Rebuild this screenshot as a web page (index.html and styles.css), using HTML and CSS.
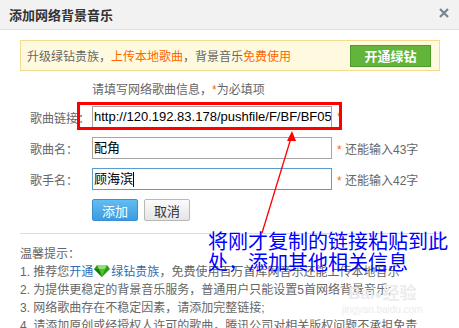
FILE: index.html
```html
<!DOCTYPE html>
<html lang="zh-CN">
<head>
    <meta charset="UTF-8">
    <title>添加网络背景音乐</title>
    <link rel="stylesheet" href="styles.css">
</head>
<body>
    <div class="dialog">
        <div class="dialog-header">
            <span class="dialog-title">添加网络背景音乐</span>
            <svg class="close-btn" width="10" height="10" viewBox="0 0 10 10">
                <path d="M1 1 L9 9 M9 1 L1 9" stroke="#7b8394" stroke-width="2.2"/>
            </svg>
        </div>
        <div class="dialog-body">
            <div class="notice">
                <span>升级绿钻贵族，<em>上传本地歌曲</em>，背景音乐<em>免费使用</em></span>
                <button class="btn-green">开通绿钻</button>
            </div>
            <div class="form">
                <div class="form-hint">请填写网络歌曲信息，<i>*</i>为必填项</div>
                <div class="form-row">
                    <label>歌曲链接：</label>
                    <div class="field">http://120.192.83.178/pushfile/F/BF/BF05E</div>
                    <span class="req"><i>*</i></span>
                </div>
                <div class="form-row">
                    <label>歌曲名：</label>
                    <div class="field">配角</div>
                    <span class="req"><i>*</i> 还能输入43字</span>
                </div>
                <div class="form-row">
                    <label>歌手名：</label>
                    <div class="field focused">顾海滨<span class="caret"></span></div>
                    <span class="req"><i>*</i> 还能输入42字</span>
                </div>
                <div class="form-actions">
                    <button class="btn btn-blue">添加</button>
                    <button class="btn btn-gray">取消</button>
                </div>
            </div>
            <div class="tips">
                <div class="tips-title">温馨提示：</div>
                <div>1. 推荐您<a>开通</a><svg class="gem" width="16" height="12" viewBox="0 0 16 12"><polygon points="3,0 13,0 16,4 8,12 0,4" fill="#2f9b1c"/><polygon points="3,0 13,0 11,4 5,4" fill="#8fe070"/><polygon points="5,4 11,4 8,12" fill="#4cc22c"/><polygon points="0,4 5,4 8,12" fill="#1d7a10"/></svg><a>绿钻贵族</a>，免费使用百万首库网音乐还能上传本地音乐</div>
                <div>2. 为提供更稳定的背景音乐服务，普通用户只能设置5首网络背景音乐;</div>
                <div>3. 网络歌曲存在不稳定因素，请添加完整链接;</div>
                <div>4. 请添加原创或经授权人许可的歌曲，腾讯公司对相关版权问题不承担免责</div>
            </div>
        </div>

        <div class="watermark">
            <div class="wm-logo">Bai<span class="paw">●</span>经验</div>
            <div class="wm-url">jingyan.baidu.com</div>
        </div>

        <!-- annotation drawn over the screenshot -->
        <div class="mark-box"></div>
        <svg class="mark-arrow" width="459" height="328" viewBox="0 0 459 328">
            <line x1="262" y1="233" x2="291" y2="138" stroke="#f00" stroke-width="1.3"/>
            <polygon points="292,131 287,141 296,141" fill="#f00"/>
        </svg>
        <div class="mark-text">将刚才复制的链接粘贴到此处，添加其他相关信息</div>
    </div>
</body>
</html>
```

FILE: styles.css
```css
body {
    margin: 0;
    font-family: 'Liberation Sans', 'Noto Sans CJK SC', sans-serif;
    font-size: 12px;
    color: #666;
    background: #fff;
}
.dialog {
    position: relative;
    width: 459px;
    height: 328px;
    overflow: hidden;
}
.dialog-header {
    height: 29px;
    background: #f2f2f2;
    border-bottom: 1px solid #e2e2e2;
    display: flex;
    align-items: center;
    justify-content: space-between;
    padding: 0 10px 0 9px;
}
.dialog-title {
    font-size: 13px;
    font-weight: 700;
    color: #333;
}
.close-btn {
    margin-top: -3px;
}
.dialog-body {
    padding: 10px 19px 0 20px;
}
.notice {
    height: 29px;
    border: 1px solid #f3dc8c;
    background: #fffadf;
    display: flex;
    align-items: center;
    justify-content: space-between;
    padding: 0 8px 0 6px;
}
.notice em {
    font-style: normal;
    color: #ff6600;
}
.btn-green {
    width: 81px;
    height: 22px;
    border: 1px solid #4f9a2c;
    background: #62b53a;
    color: #fff;
    font-family: inherit;
    font-size: 13px;
    font-weight: 700;
    padding: 0;
}
.form {
    padding-left: 10px;
}
.form-hint {
    margin: 12px 0 0 62px;
    line-height: 14px;
}
.form-hint i, .req i {
    font-style: normal;
    color: #ff6600;
}
.form-row {
    display: flex;
    align-items: center;
    height: 22px;
    margin-top: 9px;
}
.form-row label {
    width: 62px;
    color: #666;
}
.field {
    width: 236px;
    height: 20px;
    border: 1px solid #a5a5a5;
    padding: 0 1px;
    font-size: 13px;
    line-height: 20px;
    color: #000;
    white-space: nowrap;
    overflow: hidden;
    display: flex;
    align-items: center;
}
.field.focused {
    border-color: #5b9ccf;
}
.caret {
    display: inline-block;
    width: 1px;
    height: 15px;
    background: #000;
}
.req {
    margin-left: 5px;
    color: #666;
}
.form-actions {
    display: flex;
    gap: 6px;
    margin: 9px 0 0 62px;
}
.btn {
    width: 46px;
    height: 22px;
    padding: 0;
    font-family: inherit;
    font-size: 13px;
    border-radius: 2px;
}
.btn-blue {
    border: 1px solid #3b8fd1;
    background: linear-gradient(#62bdf2, #3d9be0);
    color: #fff;
}
.btn-gray {
    border: 1px solid #b8b8b8;
    background: linear-gradient(#fbfbfb, #e5e5e5);
    color: #333;
}
.tips {
    margin-top: 12px;
    border-top: 1px solid #ddd;
    padding-top: 11px;
    line-height: 18px;
    white-space: nowrap;
}
.tips a {
    color: #2f6eb2;
}
.gem {
    vertical-align: -1px;
    margin: 0 1px;
}
.watermark {
    position: absolute;
    left: 342px;
    top: 284px;
    color: #ececec;
    text-align: center;
}
.wm-logo {
    font-size: 17px;
    font-weight: 700;
    line-height: 19px;
}
.paw {
    font-size: 13px;
}
.wm-url {
    font-size: 10px;
    line-height: 11px;
}
.mark-box {
    position: absolute;
    left: 77px;
    top: 102px;
    width: 259px;
    height: 22px;
    border: 3px solid #f00;
}
.mark-arrow {
    position: absolute;
    left: 0;
    top: 0;
}
.mark-text {
    position: absolute;
    left: 208px;
    top: 230px;
    width: 242px;
    font-family: 'Noto Sans CJK SC', sans-serif;
    font-size: 20px;
    line-height: 21px;
    color: #0000ff;
}
```
